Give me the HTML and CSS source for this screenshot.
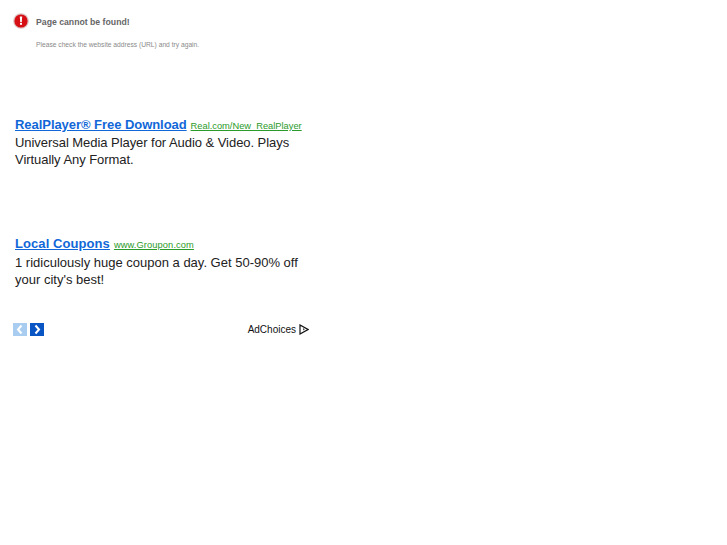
FILE: index.html
```html
<!DOCTYPE html>
<html lang="en">
<head>
<meta charset="utf-8">
<title>Page cannot be found</title>
<link rel="stylesheet" href="styles.css">
</head>
<body>
<header class="error">
  <div class="error-title">
    <svg class="error-icon" width="16" height="16" viewBox="0 0 16 16" aria-hidden="true">
      <circle cx="8" cy="8" r="7.8" fill="#dcc0c0"/>
      <circle cx="8" cy="8" r="6.6" fill="#d50f14"/>
      <path d="M6.8 3.4h2.4l-.4 5.5H7.2z" fill="#fff"/>
      <rect x="7" y="9.8" width="2" height="2" fill="#fff"/>
    </svg>
    <strong>Page cannot be found!</strong>
  </div>
  <p class="error-text">Please check the website address (URL) and try again.</p>
</header>
<main class="ads">
  <section class="ad">
    <div class="ad-head"><a class="ad-title" href="#">RealPlayer® Free Download</a> <a class="ad-url" href="#">Real.com/New_RealPlayer</a></div>
    <p class="ad-body">Universal Media Player for Audio &amp; Video. Plays Virtually Any Format.</p>
  </section>
  <section class="ad ad-wide">
    <div class="ad-head"><a class="ad-title" href="#">Local Coupons</a> <a class="ad-url" href="#">www.Groupon.com</a></div>
    <p class="ad-body">1 ridiculously huge coupon a day. Get 50-90% off your city's best!</p>
  </section>
  <footer class="ad-foot">
    <div class="pager">
      <span class="page-btn page-prev"><svg width="14" height="13" viewBox="0 0 14 13" aria-hidden="true"><path d="M8.5 2.5 5 6.5l3.5 4" fill="none" stroke="#fff" stroke-width="2"/></svg></span>
      <span class="page-btn page-next"><svg width="14" height="13" viewBox="0 0 14 13" aria-hidden="true"><path d="M5.5 2.5 9 6.5l-3.5 4" fill="none" stroke="#fff" stroke-width="2"/></svg></span>
    </div>
    <div class="adchoices">AdChoices
      <svg width="10" height="11" viewBox="0 0 10 11" aria-hidden="true"><path d="M1 1v9l8-4.5z" fill="none" stroke="#111" stroke-width="1.2"/><path d="M4 4v2.5l2-1.2z" fill="#555"/></svg>
    </div>
  </footer>
</main>
</body>
</html>
```
FILE: styles.css
```css
html, body { background: #fff; }
body {
  margin: 0;
  padding: 12px 0 0 13px;
  font-family: "Liberation Sans", Arial, sans-serif;
  color: #222;
}
.error-title {
  display: flex;
  align-items: center;
  gap: 7px;
  height: 17px;
  font-size: 8.7px;
  color: #666;
}
.error-title strong { position: relative; top: 1px; }
.error-text {
  margin: 11px 0 0 23px;
  font-size: 6.7px;
  line-height: 9px;
  color: #8a8a8a;
}
.ads {
  width: 296px;
  margin-top: 66px;
}
.ad { padding-left: 2px; height: 119px; }
.ad-head { line-height: 18px; white-space: nowrap; }
.ad-title {
  font-size: 13px;
  font-weight: bold;
  color: #1167d8;
  letter-spacing: -0.05px;
}
.ad-url {
  font-size: 9.3px;
  color: #2a9a2a;
  margin-left: -0.5px;
}
.ad-body {
  margin: -1px 0 0;
  font-size: 13px;
  line-height: 17px;
  letter-spacing: -0.05px;
  color: #222;
}
.ad-wide .ad-title { letter-spacing: 0.08px; }
.ad-wide .ad-url { letter-spacing: 0.1px; }
.ad-wide .ad-body { margin-top: 0; letter-spacing: 0; }
.ad-foot {
  display: flex;
  justify-content: space-between;
  align-items: center;
  margin-top: -31px;
  height: 14px;
}
.pager { display: flex; gap: 3px; }
.page-btn { display: block; width: 14px; height: 13px; }
.page-btn svg { display: block; }
.page-prev { background: #a9cdf0; }
.page-next { background: #0a55c4; }
.adchoices {
  display: flex;
  align-items: center;
  gap: 3px;
  font-size: 10px;
  color: #111;
}
```
